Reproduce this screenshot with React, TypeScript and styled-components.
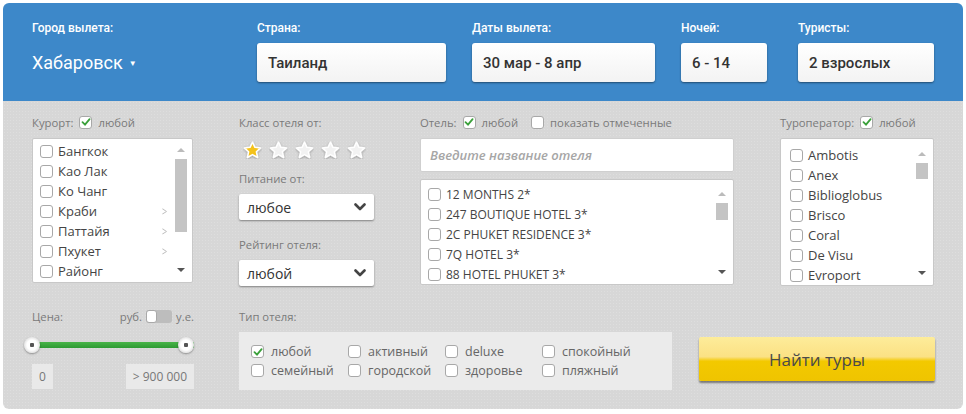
import React from "react";
import styled, { createGlobalStyle } from "styled-components";

const GlobalStyle = createGlobalStyle`
  html, body {
    margin: 0;
    padding: 0;
    background: #ffffff;
  }
  body {
    font-family: "Open Sans", "DejaVu Sans", sans-serif;
  }
`;

const Page = styled.div`
  padding: 3px;
  width: 960px;
`;

const Header = styled.header`
  background: #3d88c9;
  border-radius: 6px 6px 0 0;
  padding: 18px 29px 19px 29px;
  display: flex;
  gap: 26px;
`;

const Field = styled.div<{ $w: number; $shift?: number }>`
  display: flex;
  flex-direction: column;
  width: ${(p) => p.$w}px;
  margin-left: ${(p) => p.$shift || 0}px;
`;

const FieldLabel = styled.div`
  font-family: Roboto, "Liberation Sans", sans-serif;
  font-weight: 500;
  font-size: 12px;
  line-height: 14px;
  color: #ffffff;
  margin-bottom: 8px;
`;

const City = styled.div`
  height: 39px;
  display: flex;
  align-items: center;
  gap: 6px;
  font-family: Roboto, "Liberation Sans", sans-serif;
  font-size: 18px;
  color: #ffffff;
`;

const Caret = styled.span`
  font-size: 8px;
  margin-top: 2px;
`;

const FieldBox = styled.div`
  height: 39px;
  box-sizing: border-box;
  display: flex;
  align-items: center;
  padding-left: 11px;
  background: linear-gradient(#ffffff, #f3f3f3);
  border-radius: 3px;
  box-shadow: 0 1px 2px rgba(0, 0, 0, 0.45);
  font-family: Roboto, "Liberation Sans", sans-serif;
  font-weight: 500;
  font-size: 15px;
  color: #333333;
`;

const Body = styled.section`
  background-color: #d7d7d7;
  background-image: radial-gradient(rgba(255, 255, 255, 0.18) 0.6px, transparent 0.8px);
  background-size: 3px 3px;
  border-radius: 0 0 6px 6px;
  padding: 13px 29px 19px 29px;
`;

const TopGrid = styled.div`
  display: grid;
  grid-template-columns: 161px 135px 314px 154px;
  column-gap: 46px;
  align-items: start;
`;

const Column = styled.div`
  display: flex;
  flex-direction: column;
`;

const LabelRow = styled.div`
  display: flex;
  align-items: center;
  gap: 6px;
  height: 16px;
  font-size: 11.3px;
  color: #7a7a7a;
`;

const Gap = styled.span`
  width: 1px;
`;

const Box = styled.span`
  flex: none;
  width: 13px;
  height: 13px;
  box-sizing: border-box;
  border: 1px solid #a8a8a8;
  border-radius: 3px;
  background: #ffffff;
  display: inline-flex;
  align-items: center;
  justify-content: center;
`;

const Check = ({ checked }: { checked?: boolean }) => (
  <Box>
    {checked && (
      <svg width="10" height="10" viewBox="0 0 10 10">
        <path d="M1.5 5.2 L4 7.6 L8.6 2.2" fill="none" stroke="#3aa03a" strokeWidth="1.8" strokeLinecap="round" />
      </svg>
    )}
  </Box>
);

const ListBox = styled.div<{ $h: number; $mt: number; $pt: number; $pl: number }>`
  margin-top: ${(p) => p.$mt}px;
  height: ${(p) => p.$h}px;
  box-sizing: border-box;
  background: #ffffff;
  border: 1px solid #c8c8c8;
  border-radius: 2px;
  display: flex;
  padding: ${(p) => p.$pt}px 5px 0 ${(p) => p.$pl}px;
`;

const Items = styled.div`
  flex: 1;
  display: flex;
  flex-direction: column;
`;

const Item = styled.div<{ $upper?: boolean }>`
  height: 20px;
  display: flex;
  align-items: center;
  gap: 5px;
  font-size: ${(p) => (p.$upper ? 12 : 13)}px;
  color: #444444;
  padding-right: 6px;
`;

const ItemText = styled.span`
  flex: 1;
`;

const Chevron = styled.span`
  color: #b8b8b8;
  font-size: 13px;
  transform: scaleX(0.7);
`;

const Scroll = styled.div`
  width: 13px;
  display: flex;
  flex-direction: column;
  align-items: center;
  padding: 3px 0 6px 0;
  align-self: stretch;
`;

const Arrow = styled.div<{ $down?: boolean }>`
  width: 0;
  height: 0;
  margin: 4px 0;
  border-left: 4px solid transparent;
  border-right: 4px solid transparent;
  ${(p) => (p.$down ? "border-top: 4px solid #555;" : "border-bottom: 4px solid #bbb;")}
`;

const Track = styled.div`
  flex: 1;
  width: 12px;
  display: flex;
  flex-direction: column;
`;

const Thumb = styled.div<{ $top: number; $h: number }>`
  margin-top: ${(p) => p.$top}px;
  height: ${(p) => p.$h}px;
  background: #c4c4c4;
`;

const Scrollbar = ({ top, h }: { top: number; h: number }) => (
  <Scroll>
    <Arrow />
    <Track>
      <Thumb $top={top} $h={h} />
    </Track>
    <Arrow $down />
  </Scroll>
);

const Stars = styled.div`
  display: flex;
  gap: 7px;
  margin-top: 11px;
  height: 18px;
  padding-left: 4px;
`;

const Star = ({ on }: { on?: boolean }) => (
  <svg width="19" height="18" viewBox="0 0 20 19">
    <defs>
      <filter id={on ? "sh1" : "sh0"} x="-30%" y="-30%" width="160%" height="160%">
        <feDropShadow dx="0" dy="0.8" stdDeviation="0.9" floodColor="#000" floodOpacity="0.35" />
      </filter>
    </defs>
    <polygon
      points="10,1.2 12.6,6.7 18.6,7.3 14.1,11.4 15.4,17.4 10,14.3 4.6,17.4 5.9,11.4 1.4,7.3 7.4,6.7"
      fill={on ? "#f4c21b" : "#f2f2f2"}
      stroke="#ffffff"
      strokeWidth="1.6"
      strokeLinejoin="round"
      filter={`url(#${on ? "sh1" : "sh0"})`}
    />
  </svg>
);

const SubLabel = styled(LabelRow)<{ $mt: number }>`
  margin-top: ${(p) => p.$mt}px;
`;

const Select = styled.div`
  margin-top: 8px;
  height: 26px;
  box-sizing: border-box;
  background: #ffffff;
  border-radius: 2px;
  box-shadow: 0 1px 2px rgba(0, 0, 0, 0.4);
  display: flex;
  align-items: center;
  justify-content: space-between;
  padding: 0 8px 0 8px;
  font-size: 14px;
  color: #333333;
`;

const SelectArrow = () => (
  <svg width="12" height="8" viewBox="0 0 12 8">
    <path d="M1.5 1.5 L6 6 L10.5 1.5" fill="none" stroke="#444" strokeWidth="2.6" strokeLinecap="round" strokeLinejoin="round" />
  </svg>
);

const SearchInput = styled.input`
  margin-top: 8px;
  height: 34px;
  box-sizing: border-box;
  border: 1px solid #cfcfcf;
  border-radius: 2px;
  background: #ffffff;
  padding: 0 9px;
  font-family: "Open Sans", sans-serif;
  font-size: 13px;
  outline: none;
  &::placeholder {
    color: #a6a6a6;
    font-style: italic;
    font-weight: 600;
  }
`;

const BottomGrid = styled.div`
  margin-top: 22px;
  display: grid;
  grid-template-columns: 162px 433px 236px;
  column-gap: 45px;
  align-items: start;
`;

const TypeColumn = styled(Column)`
  margin-right: -18px;
`;

const ButtonColumn = styled(Column)`
  margin-left: -18px;
`;

const PriceHead = styled(LabelRow)`
  justify-content: space-between;
`;

const Currency = styled.div`
  display: flex;
  align-items: center;
  gap: 4px;
`;

const Toggle = styled.span`
  width: 26px;
  height: 13px;
  border-radius: 3px;
  background: #bdbdbd;
  display: inline-flex;
`;

const Knob = styled.span`
  width: 11px;
  height: 13px;
  box-sizing: border-box;
  border: 1px solid #a9a9a9;
  border-radius: 3px;
  background: #ffffff;
`;

const Slider = styled.div`
  margin-top: 13px;
  height: 16px;
  display: flex;
  align-items: center;
`;

const Handle = styled.span`
  flex: none;
  width: 16px;
  height: 16px;
  border-radius: 50%;
  background: radial-gradient(circle, #555 0 2px, #ffffff 2.5px, #ffffff 5px, #e2e2e2 8px);
  box-shadow: 0 1px 2px rgba(0, 0, 0, 0.35);
  position: relative;
  z-index: 1;
  margin-left: -8px;
`;

const Rail = styled.span`
  flex: 1;
  height: 6px;
  background: linear-gradient(#49b449, #2e9a33);
  margin: 0 -8px;
`;

const Values = styled.div`
  margin-top: 11px;
  display: flex;
  justify-content: space-between;
`;

const Value = styled.span`
  height: 25px;
  display: inline-flex;
  align-items: center;
  padding: 0 7px;
  background: #e9e9e9;
  font-size: 12px;
  color: #777777;
`;

const TypeBox = styled.div`
  margin-top: 8px;
  width: 433px;
  height: 58px;
  box-sizing: border-box;
  background: #ebebeb;
  padding: 10px 12px 0 12px;
  display: grid;
  grid-template-columns: repeat(4, 97px);
  grid-auto-rows: 19px;
`;

const TypeItem = styled.div`
  display: flex;
  align-items: center;
  gap: 7px;
  font-size: 12.5px;
  color: #666666;
`;

const FindButton = styled.button`
  margin-top: 29px;
  height: 44px;
  width: 236px;
  border: none;
  border-radius: 2px;
  background: linear-gradient(#fdec9a 0%, #fbe184 45%, #f3c900 55%, #efc400 100%);
  box-shadow: 0 2px 2px rgba(0, 0, 0, 0.45);
  font-family: "Open Sans", sans-serif;
  font-size: 17px;
  color: #4a4a4a;
  cursor: pointer;
`;

const resorts = [
  { name: "Бангкок" },
  { name: "Као Лак" },
  { name: "Ко Чанг" },
  { name: "Краби", sub: true },
  { name: "Паттайя", sub: true },
  { name: "Пхукет", sub: true },
  { name: "Районг" },
];

const hotels = ["12 MONTHS 2*", "247 BOUTIQUE HOTEL 3*", "2C PHUKET RESIDENCE 3*", "7Q HOTEL 3*", "88 HOTEL PHUKET 3*"];

const operators = ["Ambotis", "Anex", "Biblioglobus", "Brisco", "Coral", "De Visu", "Evroport"];

const hotelTypes = [
  { name: "любой", on: true },
  { name: "активный" },
  { name: "deluxe" },
  { name: "спокойный" },
  { name: "семейный" },
  { name: "городской" },
  { name: "здоровье" },
  { name: "пляжный" },
];

export default function App() {
  return (
    <Page>
      <GlobalStyle />
      <Header>
        <Field $w={199}>
          <FieldLabel>Город вылета:</FieldLabel>
          <City>
            Хабаровск <Caret>▼</Caret>
          </City>
        </Field>
        <Field $w={189}>
          <FieldLabel>Страна:</FieldLabel>
          <FieldBox>Таиланд</FieldBox>
        </Field>
        <Field $w={183}>
          <FieldLabel>Даты вылета:</FieldLabel>
          <FieldBox>30 мар - 8 апр</FieldBox>
        </Field>
        <Field $w={86}>
          <FieldLabel>Ночей:</FieldLabel>
          <FieldBox>6 - 14</FieldBox>
        </Field>
        <Field $w={136} $shift={5}>
          <FieldLabel>Туристы:</FieldLabel>
          <FieldBox>2 взрослых</FieldBox>
        </Field>
      </Header>

      <Body>
        <TopGrid>
          <Column>
            <LabelRow>
              Курорт: <Check checked /> любой
            </LabelRow>
            <ListBox $h={145} $mt={8} $pt={2} $pl={7}>
              <Items>
                {resorts.map((r) => (
                  <Item key={r.name}>
                    <Check />
                    <ItemText>{r.name}</ItemText>
                    {r.sub && <Chevron>&gt;</Chevron>}
                  </Item>
                ))}
              </Items>
              <Scrollbar top={3} h={73} />
            </ListBox>
          </Column>

          <Column>
            <LabelRow>Класс отеля от:</LabelRow>
            <Stars>
              <Star on />
              <Star />
              <Star />
              <Star />
              <Star />
            </Stars>
            <SubLabel $mt={11}>Питание от:</SubLabel>
            <Select>
              любое <SelectArrow />
            </Select>
            <SubLabel $mt={16}>Рейтинг отеля:</SubLabel>
            <Select>
              любой <SelectArrow />
            </Select>
          </Column>

          <Column>
            <LabelRow>
              Отель: <Check checked /> любой <Gap /> <Check /> показать отмеченные
            </LabelRow>
            <SearchInput placeholder="Введите название отеля" />
            <ListBox $h={106} $mt={7} $pt={5} $pl={7}>
              <Items>
                {hotels.map((h) => (
                  <Item key={h} $upper>
                    <Check />
                    <ItemText>{h}</ItemText>
                  </Item>
                ))}
              </Items>
              <Scrollbar top={3} h={17} />
            </ListBox>
          </Column>

          <Column>
            <LabelRow>
              Туроператор: <Check checked /> любой
            </LabelRow>
            <ListBox $h={148} $mt={8} $pt={6} $pl={9}>
              <Items>
                {operators.map((o) => (
                  <Item key={o}>
                    <Check />
                    <ItemText>{o}</ItemText>
                  </Item>
                ))}
              </Items>
              <Scrollbar top={3} h={16} />
            </ListBox>
          </Column>
        </TopGrid>

        <BottomGrid>
          <Column>
            <PriceHead>
              Цена:
              <Currency>
                руб. <Toggle><Knob /></Toggle> у.е.
              </Currency>
            </PriceHead>
            <Slider>
              <Handle />
              <Rail />
              <Handle />
            </Slider>
            <Values>
              <Value>0</Value>
              <Value>&gt; 900 000</Value>
            </Values>
          </Column>

          <TypeColumn>
            <LabelRow>Тип отеля:</LabelRow>
            <TypeBox>
              {hotelTypes.map((t) => (
                <TypeItem key={t.name}>
                  <Check checked={t.on} />
                  {t.name}
                </TypeItem>
              ))}
            </TypeBox>
          </TypeColumn>

          <ButtonColumn>
            <FindButton>Найти туры</FindButton>
          </ButtonColumn>
        </BottomGrid>
      </Body>
    </Page>
  );
}
